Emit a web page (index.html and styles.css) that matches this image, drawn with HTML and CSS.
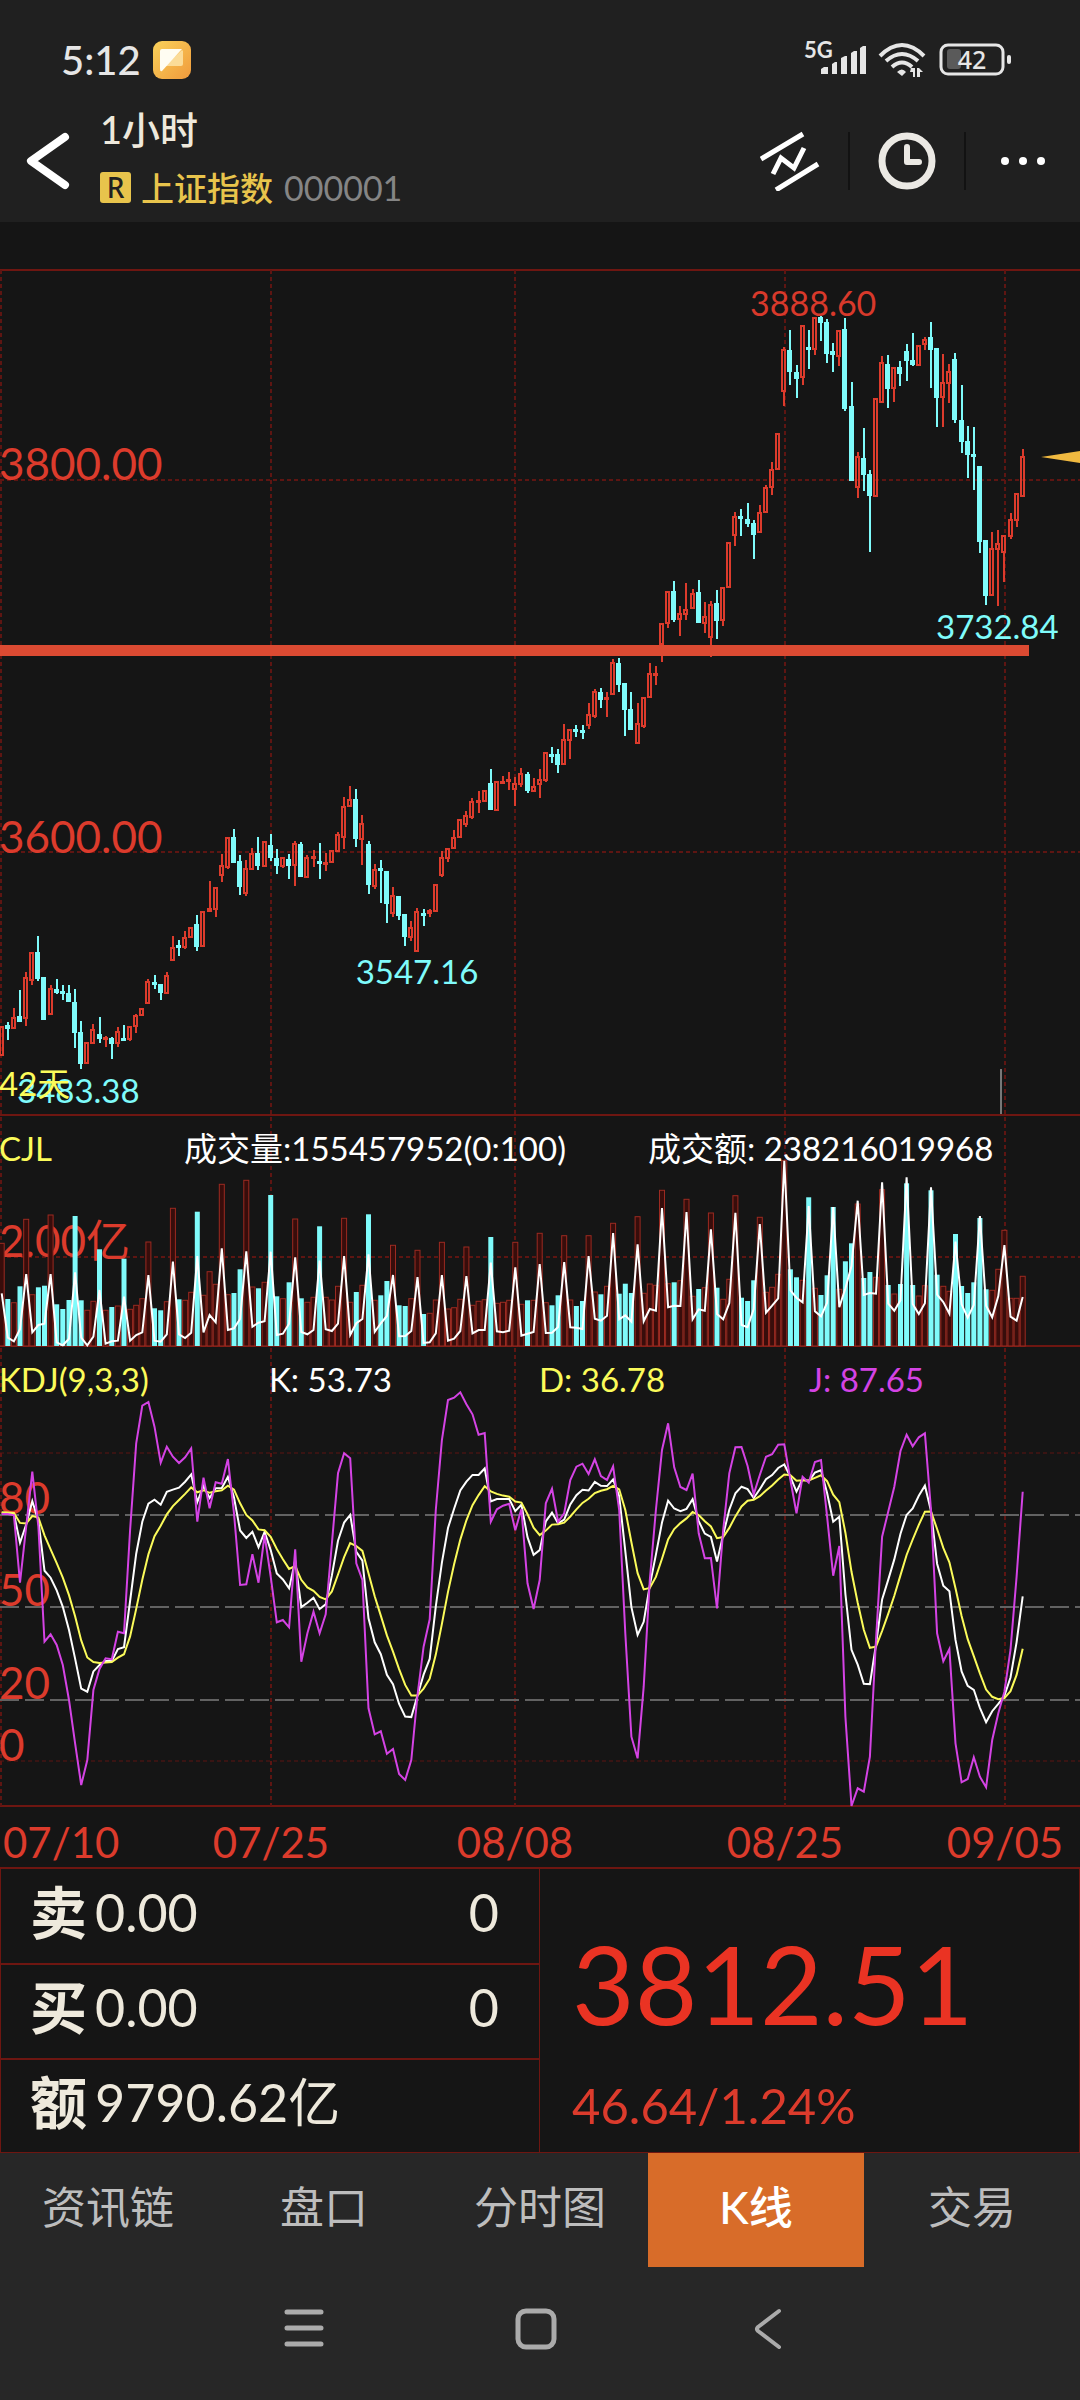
FILE: index.html
```html
<!DOCTYPE html>
<html lang="zh-CN">
    <head>
        <meta charset="UTF-8" />
        <meta name="viewport" content="width=device-width, initial-scale=1.0" />
        <title>上证指数 000001</title>
        <link rel="stylesheet" href="styles.css">
    </head>
    <body>
        <header>
            <div class="status">
                <span class="time">5:12</span>
                <svg class="app-icon" width="38" height="38" viewBox="0 0 38 38">
                    <defs>
                        <linearGradient id="gold" x1="0" y1="0" x2="1" y2="1">
                            <stop offset="0" stop-color="#fad25a" />
                            <stop offset="1" stop-color="#f09a3c" />
                        </linearGradient>
                    </defs>
                    <rect width="38" height="38" rx="9" fill="url(#gold)" />
                    <path d="M29 9L12 25H28Q30 25 30 23V10Z" fill="#fbdc98" />
                    <path d="M9 8H29L9 30Q7 31 7 28V10Q7 8 9 8Z" fill="#fffdf2" />
                </svg>
                <svg class="signal" width="212" height="60" viewBox="800 30 212 60">
                    <text x="804" y="58" class="net">5G</text>
                    <g fill="#e6e6e6">
                        <path d="M821 74V69L824 67H828V74ZM832 74V64L835 62H837V74ZM841 74V58L845 56H847V74ZM851 74V53L854 51H857V74ZM860 74V48L863 46H866V74Z" />
                        <path d="M897 72Q902 67 906 72L902 76Z" />
                        <path d="M911 68L915 68V77H913V72H910ZM917 77V68L919 68L923 72H920V77Z" />
                        <rect x="1007" y="55" width="4" height="9" rx="2" />
                    </g>
                    <g fill="none" stroke="#e6e6e6" stroke-width="4">
                        <path d="M880 56Q902 34 924 56" />
                        <path d="M886 61Q902 47 918 61" />
                        <path d="M892 67Q902 58 912 67" />
                    </g>
                    <rect x="947" y="49" width="14" height="20" rx="3" fill="#5a5a5a" />
                    <rect x="941" y="45" width="62" height="29" rx="7" fill="none" stroke="#e6e6e6" stroke-width="3" />
                    <text x="972" y="69" class="battery">42</text>
                </svg>
            </div>
            <div class="toolbar">
                <button class="back" aria-label="返回">
                    <svg width="48" height="64" viewBox="26 129 48 64">
                        <path d="M67 137L33 161L67 185" fill="none" stroke="#fff" stroke-width="8" stroke-linecap="round" stroke-linejoin="round" />
                    </svg>
                </button>
                <div class="title">
                    <h1>1小时</h1>
                    <p><span class="badge">R</span><b>上证指数</b><span class="code">000001</span></p>
                </div>
                <button class="tool" aria-label="画线">
                    <svg width="60" height="60" viewBox="760 131 60 60" fill="none" stroke="#fff" stroke-width="5" stroke-linejoin="miter">
                        <path d="M761 159L803 134M776 190L818 164M773 174L781 158L794 168L804 148" />
                    </svg>
                </button>
                <button class="tool" aria-label="周期">
                    <svg width="58" height="58" viewBox="0 0 58 58" fill="none" stroke="#ebe9e4">
                        <circle cx="29" cy="29" r="25" stroke-width="7" />
                        <path d="M29 15V30H41" stroke-width="6" stroke-linecap="round" stroke-linejoin="round" />
                    </svg>
                </button>
                <button class="tool" aria-label="更多">
                    <svg width="48" height="12" viewBox="0 0 48 12" fill="#fff">
                        <circle cx="6" cy="6" r="4" />
                        <circle cx="24" cy="6" r="4" />
                        <circle cx="42" cy="6" r="4" />
                    </svg>
                </button>
            </div>
        </header>

        <main>
            <svg id="chart" viewBox="0 222 1080 1646">
                <!-- grid -->
                <path class="frame" d="M0 270H1080M0 1115H1080M0 1346H1080M0 1806H1080" />
                <path class="grid" d="M1 270V1806M271 270V1806M515 270V1806M785 270V1806M1005 270V1806M0 480H1080M0 852H1080M0 1257H1080" />
                <path class="grid thin" d="M0 1453H1080M0 1761H1080" />
                <path class="level" d="M0 1515H1080M0 1607H1080M0 1700H1080" />
                <path d="M1001 1069V1114" stroke="#777" stroke-width="2" />

                <!-- axis labels -->
                <g class="axis">
                    <text x="-1" y="480">3800.00</text>
                    <text x="-1" y="853">3600.00</text>
                    <text x="-1" y="1257">2.00亿</text>
                    <text x="-1" y="1514">80</text>
                    <text x="-1" y="1606">50</text>
                    <text x="-1" y="1699">20</text>
                    <text x="-1" y="1761">0</text>
                </g>
                <g class="axis dates">
                    <text x="3" y="1858">07/10</text>
                    <text x="271" y="1858" text-anchor="middle">07/25</text>
                    <text x="515" y="1858" text-anchor="middle">08/08</text>
                    <text x="785" y="1858" text-anchor="middle">08/25</text>
                    <text x="1005" y="1858" text-anchor="middle">09/05</text>
                </g>

                <g id="candles"></g>
                <rect x="0" y="645" width="1029" height="11" fill="#db4a32" />
                <path d="M1041 457L1080 451V463Z" fill="#f0b940" />
                <g id="volume"></g>
                <g id="kdj"></g>

                <g class="note">
                    <text x="750" y="316" class="red">3888.60</text>
                    <text x="936" y="639" class="cyan">3732.84</text>
                    <text x="417" y="984" class="cyan" text-anchor="middle">3547.16</text>
                    <text x="17" y="1103" class="cyan">3483.38</text>
                    <text x="-1" y="1096" class="yellow">42天</text>
                    <text x="-1" y="1161" class="yellow">CJL</text>
                    <text x="184" y="1161">成交量:155457952(0:100)</text>
                    <text x="648" y="1161">成交额: 238216019968</text>
                    <text x="-1" y="1392" class="yellow">KDJ(9,3,3)</text>
                    <text x="269" y="1392">K: 53.73</text>
                    <text x="539" y="1392" class="yellow">D: 36.78</text>
                    <text x="809" y="1392" class="purple">J: 87.65</text>
                </g>
            </svg>

            <section class="quote">
                <div class="orders">
                    <p><b>卖</b><span>0.00</span><span class="amount">0</span></p>
                    <p><b>买</b><span>0.00</span><span class="amount">0</span></p>
                    <p><b>额</b><span>9790.62亿</span></p>
                </div>
                <div class="last">
                    <div class="price">3812.51</div>
                    <div class="change">46.64/1.24%</div>
                </div>
            </section>
        </main>

        <nav class="tabs">
            <a href="#">资讯链</a>
            <a href="#">盘口</a>
            <a href="#">分时图</a>
            <a href="#" class="active">K线</a>
            <a href="#">交易</a>
        </nav>

        <footer>
            <button aria-label="菜单">
                <svg width="40" height="40" viewBox="0 0 40 40" stroke="#ababab" stroke-width="5" stroke-linecap="round">
                    <path d="M3 4H37M3 20H37M3 36H37" />
                </svg>
            </button>
            <button aria-label="主屏幕">
                <svg width="42" height="42" viewBox="0 0 42 42" fill="none" stroke="#ababab" stroke-width="5">
                    <rect x="3" y="3" width="36" height="36" rx="8" />
                </svg>
            </button>
            <button aria-label="后退">
                <svg width="40" height="42" viewBox="0 0 40 42" fill="none" stroke="#ababab" stroke-width="4" stroke-linecap="round" stroke-linejoin="round">
                    <path d="M31 3L10 19Q8 21 10 23L31 39" />
                </svg>
            </button>
        </footer>

        <script src="script.js"></script>
    </body>
</html>
```
FILE: styles.css
```css
body {
    margin: 0;
    min-height: 100vh;
    background-color: #272727;
    color: #eee9dc;
    font-family: Lato, "Noto Sans CJK SC", sans-serif;
}

h1, p {
    margin: 0;
    font-weight: normal;
}

button {
    padding: 0;
    border: none;
    background: none;
    cursor: pointer;
}

svg {
    display: block;
}

header {
    box-sizing: border-box;
    height: 222px;
    padding-top: 40px;
    background-color: #202020;
}

.status {
    display: flex;
    align-items: center;
    height: 40px;
    padding: 0 68px 0 61px;
    color: #e6e6e6;
}

.time {
    font-size: 40px;
    font-weight: 500;
}

.app-icon {
    margin-left: 12px;
}

.signal {
    margin-left: auto;
}

.net {
    font-size: 22px;
    font-weight: bold;
    fill: #e6e6e6;
}

.battery {
    font-family: "Noto Sans", sans-serif;
    font-size: 25px;
    font-weight: 500;
    text-anchor: middle;
    fill: #e6e6e6;
}

.toolbar {
    display: flex;
    align-items: center;
    height: 120px;
    margin-top: 21px;
    padding-left: 24px;
}

.title {
    flex: 1;
    margin-left: 28px;
    margin-top: -4px;
}

.title h1 {
    font-size: 38px;
    font-weight: 500;
    line-height: 56px;
}

.title p {
    display: flex;
    align-items: center;
    height: 60px;
    font-size: 33px;
}

.title b {
    margin: 0 11px 0 10px;
    font-weight: 500;
    color: #e8c44c;
}

.badge {
    width: 31px;
    height: 31px;
    border-radius: 3px;
    background-color: #e8c44c;
    color: #202020;
    font-family: "Noto Sans", sans-serif;
    font-size: 28px;
    font-weight: 500;
    line-height: 31px;
    text-align: center;
}

.code {
    font-size: 34px;
    color: #858585;
}

.tool {
    display: flex;
    align-items: center;
    justify-content: center;
    width: 116px;
    height: 58px;
    border-left: 2px solid #121212;
    box-sizing: border-box;
}

.title + .tool {
    border-left: none;
}

main {
    background-color: #151515;
}

#chart {
    width: 100%;
}

.frame {
    stroke: #6e1611;
    stroke-width: 2;
}

.grid {
    stroke: #5e1512;
    stroke-width: 2;
    stroke-dasharray: 4 3;
}

.grid.thin {
    stroke-width: 1;
}

.level {
    stroke: #626262;
    stroke-width: 2;
    stroke-dasharray: 19 6;
}

.axis {
    font-size: 44px;
    fill: #dc3b2c;
}

.axis.dates {
    font-size: 42px;
}

.note {
    font-size: 33px;
    fill: #fff;
}

.note .red {
    font-size: 34px;
    fill: #d8392b;
}

.note .cyan {
    font-size: 33px;
    fill: #7ffbfb;
}

.note .yellow {
    fill: #fbfb5a;
}

.note .purple {
    fill: #d443e4;
}

.up {
    fill: none;
    stroke: #dc3b2c;
    stroke-width: 2;
}

.down {
    fill: #7ffbfb;
    stroke: #7ffbfb;
    stroke-width: 2;
}

.vol-up {
    fill: #380d0b;
    stroke: #9c2a21;
    stroke-width: 1;
}

.vol-down {
    fill: #7ffbfb;
}

.line {
    fill: none;
    stroke-width: 2;
}

.quote {
    display: grid;
    grid-template-columns: 1fr 1fr;
    border: 1px solid #6e1611;
    border-top-width: 2px;
    box-sizing: border-box;
    height: 286px;
    margin-top: -1px;
}

.orders {
    display: grid;
    grid-template-rows: repeat(3, 1fr);
    border-right: 1px solid #6e1611;
}

.orders p {
    display: flex;
    align-items: center;
    padding: 0 40px 8px 29px;
    font-size: 52px;
    line-height: 56px;
}

.orders p + p {
    border-top: 2px solid #6e1611;
}

.orders b {
    margin-right: 8px;
    font-size: 57px;
    font-weight: bold;
}

.orders .amount {
    margin-left: auto;
}

.last {
    padding: 58px 0 0 32px;
    color: #ea3323;
}

.price {
    font-size: 108px;
    line-height: 112px;
}

.change {
    margin-top: 36px;
    font-size: 49px;
    line-height: 60px;
    color: #dc3b2c;
}

.tabs {
    display: grid;
    grid-template-columns: repeat(5, 1fr);
    height: 114px;
}

.tabs a {
    color: #bdbdbd;
    font-size: 44px;
    line-height: 108px;
    text-align: center;
    text-decoration: none;
}

.tabs .active {
    background-color: #d86c29;
    color: #fff;
    font-weight: 500;
}

footer {
    display: flex;
    justify-content: center;
    padding: 41px 8px 41px 0;
}

footer button {
    display: flex;
    justify-content: center;
    width: 232px;
}
```
FILE: script.js
```js
const STEP = 6.114;
const START = 1.7;

// Each candle: direction (u / d), body top, body bottom, high, low
const candles = `
u1026,1055,1026,1055 d1025,1028,1022,1040 u1017,1028,1008,1028 d1016,1021,990,1022
u977,1018,972,1026 u952,980,952,985 d952,978,936,981 d977,1019,977,1019
u988,1014,985,1014 d989,992,979,994 d991,993,985,1000 d993,1001,985,1001
d1002,1032,989,1048 d1032,1063,1021,1069 u1042,1063,1042,1063 u1029,1043,1024,1043
d1034,1038,1017,1043 u1037,1038,1036,1047 d1038,1043,1037,1059 u1031,1043,1027,1047
d1038,1039,1025,1040 u1026,1039,1026,1041 u1015,1026,1014,1033 u1008,1015,1008,1015
u981,1003,979,1004 d982,984,975,989 d984,992,984,1000 u975,993,972,993
u947,960,936,960 d945,946,940,956 u937,947,931,949 u927,937,927,937
d924,946,915,951 u911,946,911,946 u908,911,881,911 u887,909,887,917
u865,875,854,882 u837,867,837,869 d837,862,829,862 d861,886,855,895
u868,893,860,896 u853,869,848,870 d853,865,837,870 u841,866,841,866
d845,857,834,861 d858,865,849,874 u857,866,857,868 d859,865,854,879
u843,865,841,886 d844,876,842,877 u857,877,855,877 u856,858,850,867
d861,863,843,879 u862,864,853,871 u850,862,850,863 u834,851,832,852
u806,837,797,849 u799,806,786,806 d799,838,789,847 u823,839,815,865
d844,884,841,894 u869,886,864,889 d868,870,860,903 d871,903,871,923
u895,913,887,917 d896,915,896,920 d914,936,914,946 u927,937,921,941
u911,951,908,951 d913,914,909,926 u910,913,909,917 u884,911,884,911
u857,875,851,877 u848,858,848,862 u837,848,830,848 u819,837,819,837
u815,824,811,827 u801,817,798,819 u800,801,791,813 u790,801,790,801
d783,809,769,809 u781,810,781,810 u781,782,776,784 u779,781,772,790
u783,789,777,806 u773,784,768,787 d774,790,772,793 u786,791,778,791
u779,784,769,798 u752,780,752,782 d754,755,747,763 d754,764,749,773
u739,764,724,764 u729,740,729,759 d729,730,725,737 d730,731,725,739
u714,725,703,729 u691,716,689,718 d692,699,688,708 u697,699,692,717
u662,694,659,694 d663,684,658,692 d683,709,683,736 d709,729,692,729
u723,743,703,743 u697,726,697,728 u673,697,663,697 u673,675,666,685
u623,644,623,662 u591,623,591,628 d591,619,581,622 u613,619,606,636
u609,614,583,620 u593,608,589,608 d592,622,580,622 u616,623,602,633
u604,637,601,657 d603,620,590,639 u587,620,587,626 u542,587,542,587
u516,535,512,546 d516,518,509,536 d519,523,503,527 d523,534,520,559
u512,532,505,532 u487,512,485,512 u469,487,462,495 u433,469,433,469
u349,391,347,406 d350,371,330,385 d372,378,365,398 u325,377,325,385
d347,349,330,369 u317,349,317,355 d317,322,316,341 d322,353,319,363
d351,354,343,372 u330,356,330,366 d329,408,318,411 d406,480,382,480
u456,487,452,498 d458,474,428,491 d474,495,470,552 u398,496,398,496
u362,402,356,402 d364,388,355,408 u367,388,367,402 d367,373,361,386
d351,360,344,381 d360,364,333,366 u345,365,345,365 u339,344,337,350
d337,349,322,388 d348,397,348,427 u382,397,354,427 u371,383,364,403
d359,419,353,423 d420,441,385,453 d441,454,426,478 d454,455,427,490
d466,541,466,553 d540,595,540,605 u548,595,532,595 u543,549,530,606
u535,552,535,582 u519,536,513,539 u493,520,493,527 u456,496,449,496
`.trim().split(/\s+/).map(c => [c[0], ...c.slice(1).split(",").map(Number)]);

// Bar tops and average line, in thirds of a unit below y = 1110
const volume = [
    400, 567, 578, 529, 328, 554, 532, 527, 315, 583, 597, 570, 318, 571, 601, 574,
    418, 601, 591, 588, 446, 598, 586, 566, 396, 595, 601, 575, 295, 568, 571, 547,
    305, 556, 485, 523, 223, 554, 549, 478, 211, 531, 535, 517, 255, 559, 566, 517,
    327, 565, 577, 562, 349, 562, 570, 529, 325, 577, 546, 526, 313, 571, 556, 513,
    406, 586, 588, 566, 421, 612, 610, 570, 397, 597, 593, 568, 411, 586, 574, 569,
    381, 580, 577, 571, 397, 583, 571, 571, 370, 578, 586, 556, 377, 570, 588, 573,
    377, 546, 553, 529, 340, 551, 521, 549, 320, 550, 522, 526, 241, 521, 517, 512,
    268, 559, 537, 533, 309, 533, 568, 508, 257, 563, 573, 511, 322, 547, 532, 493,
    152, 478, 502, 511, 262, 535, 555, 496, 291, 538, 454, 400, 282, 504, 486, 502,
    239, 525, 552, 522, 220, 525, 558, 527, 241, 494, 529, 544, 372, 528, 549, 517,
    324, 538, 541, 478, 361, 565, 565, 499
];

const amount = [
    550, 683, 694, 658, 492, 667, 645, 641, 492, 697, 706, 686, 487, 683, 706, 680,
    540, 701, 694, 692, 560, 692, 675, 667, 495, 692, 695, 673, 455, 673, 684, 668,
    438, 667, 615, 637, 415, 660, 655, 627, 424, 650, 638, 634, 425, 675, 671, 641,
    442, 666, 673, 660, 452, 658, 663, 641, 438, 675, 640, 627, 433, 666, 640, 618,
    495, 679, 678, 663, 501, 699, 697, 670, 495, 692, 686, 663, 498, 670, 660, 660,
    458, 664, 667, 662, 472, 677, 671, 666, 462, 669, 668, 651, 456, 652, 653, 657,
    438, 626, 632, 617, 369, 628, 616, 635, 403, 634, 597, 602, 294, 592, 587, 588,
    306, 628, 598, 602, 358, 612, 628, 579, 308, 645, 652, 597, 342, 608, 587, 565,
    152, 541, 563, 577, 288, 604, 619, 578, 291, 592, 535, 468, 272, 555, 549, 551,
    217, 581, 602, 571, 202, 582, 612, 580, 232, 554, 576, 611, 395, 583, 623, 585,
    318, 587, 622, 558, 405, 620, 632, 561
];

// J line, in thirds of a unit below y = 1350
const j = [
    492, 492, 496, 698, 530, 365, 530, 875, 853, 885, 945, 1050, 1180, 1305, 1230, 1020,
    957, 925, 928, 845, 850, 540, 280, 167, 156, 230, 338, 290, 320, 339, 322, 295,
    515, 383, 475, 397, 401, 327, 490, 705, 703, 613, 698, 555, 680, 817, 810, 832,
    598, 935, 850, 785, 850, 793, 580, 370, 310, 325, 640, 690, 1075, 1153, 1144, 1211,
    1197, 1272, 1290, 1230, 1035, 890, 808, 480, 270, 150, 143, 127, 163, 193, 254, 249,
    515, 478, 467, 461, 541, 477, 700, 777, 690, 460, 416, 515, 490, 390, 350, 341,
    372, 328, 378, 390, 349, 480, 850, 1160, 1225, 1010, 690, 480, 300, 220, 352, 411,
    420, 371, 550, 625, 624, 775, 540, 370, 292, 291, 348, 433, 375, 320, 313, 284,
    283, 390, 490, 380, 398, 336, 330, 500, 677, 588, 1100, 1368, 1315, 1325, 1220, 870,
    560, 485, 410, 303, 254, 289, 262, 250, 480, 850, 934, 897, 1180, 1297, 1287, 1222,
    1280, 1312, 1170, 1090, 1025, 900, 680, 425
];

// D follows from J = 3K - 2D and D = (2 * previous D + K) / 3
const d = [];
const k = [];
let prev = 486;
for (const value of j) {
    prev = (6 * prev + value) / 7;
    d.push(prev);
    k.push((value + 2 * prev) / 3);
}

function x(i) {
    return START + i * STEP;
}

function line(values, top, color) {
    const points = values.map((v, i) => `${x(i).toFixed(1)},${(top + v / 3).toFixed(1)}`).join(" ");
    return `<polyline class="line" stroke="${color}" points="${points}" />`;
}

function drawCandles() {
    return candles.map(([dir, top, bottom, high, low], i) => {
        const cx = Math.round(x(i));
        const name = dir === "u" ? "up" : "down";
        const height = Math.max(bottom - top - 1, 1);
        return `<path class="${name}" d="M${cx} ${high}V${top}M${cx} ${bottom}V${low}M${cx - 2} ${top + 1}h3v${height}h-3Z" />`;
    }).join("");
}

function drawVolume() {
    return volume.map((v, i) => {
        const name = candles[i][0] === "u" ? "vol-up" : "vol-down";
        const top = 1110 + v / 3;
        return `<rect class="${name}" x="${(x(i) - 2.5).toFixed(1)}" y="${top.toFixed(1)}" width="5" height="${(1346 - top).toFixed(1)}" />`;
    }).join("");
}

document.getElementById("candles").innerHTML = drawCandles();
document.getElementById("volume").innerHTML = drawVolume() + line(amount, 1110, "#fff");
document.getElementById("kdj").innerHTML =
    line(k, 1350, "#fff") + line(d, 1350, "#fbfb5a") + line(j, 1350, "#d443e4");
```
